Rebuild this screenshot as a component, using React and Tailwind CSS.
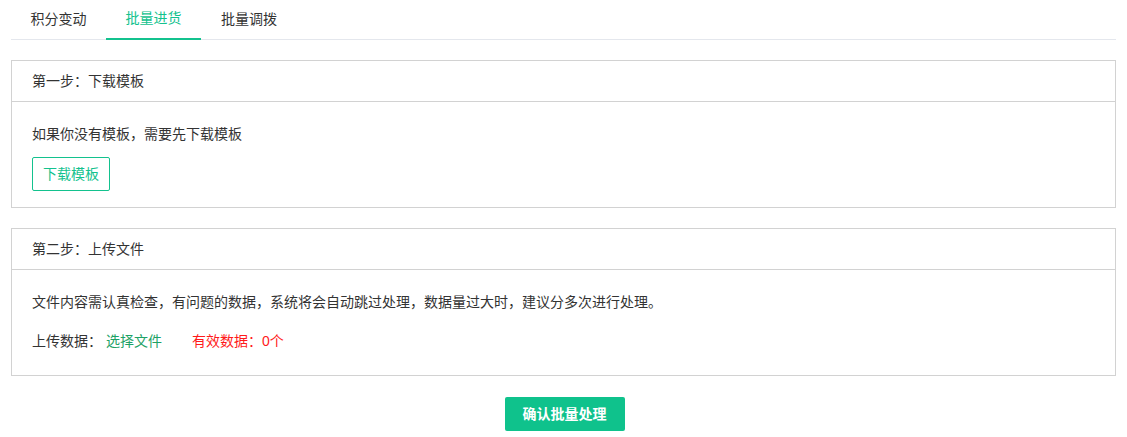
export default function App() {
  const font = { fontFamily: '"Liberation Sans", "Noto Sans CJK SC", sans-serif' };
  return (
    <div className="w-[1127px] h-[437px] bg-white text-[14px] text-[#333]" style={font}>
      <div className="px-[11px]">
        <div className="flex h-[40px] border-b border-[#e4e7ed]">
          <div className="w-[95px] flex items-center justify-center h-[40px] pb-[1px]">积分变动</div>
          <div className="w-[95px] flex items-center justify-center h-[40px] pb-[1px] text-[#13c28e] border-b-2 border-[#13c28e] -mb-[1px]">批量进货</div>
          <div className="w-[96px] flex items-center justify-center h-[40px] pb-[1px]">批量调拨</div>
        </div>
        <div className="mt-[20px] border border-[#d2d2d2]">
          <div className="h-[41px] flex items-center px-[20px] border-b border-[#d2d2d2]">第一步：下载模板</div>
          <div className="px-[20px] pt-[20px] pb-[16px]">
            <div className="h-[24px] flex items-center">如果你没有模板，需要先下载模板</div>
            <button className="mt-[11px] w-[78px] h-[34px] border border-[#13c28e] rounded-[2px] text-[#13c28e] flex items-center justify-center">下载模板</button>
          </div>
        </div>
        <div className="mt-[20px] border border-[#d2d2d2]">
          <div className="h-[41px] flex items-center px-[20px] border-b border-[#d2d2d2]">第二步：上传文件</div>
          <div className="px-[20px] pt-[20px] pb-[22px]">
            <div className="h-[24px] flex items-center">文件内容需认真检查，有问题的数据，系统将会自动跳过处理，数据量过大时，建议分多次进行处理。</div>
            <div className="mt-[15px] h-[24px] flex items-center">
              <span>上传数据：</span>
              <span className="ml-[4px] text-[#1ea266]">选择文件</span>
              <span className="ml-[30px] text-[#ff1a1a]">有效数据：0个</span>
            </div>
          </div>
        </div>
        <div className="flex justify-center mt-[21px]">
          <button className="w-[120px] h-[34px] ml-[2px] rounded-[2px] bg-[#0fc28c] text-white font-bold flex items-center justify-center">确认批量处理</button>
        </div>
      </div>
    </div>
  );
}
